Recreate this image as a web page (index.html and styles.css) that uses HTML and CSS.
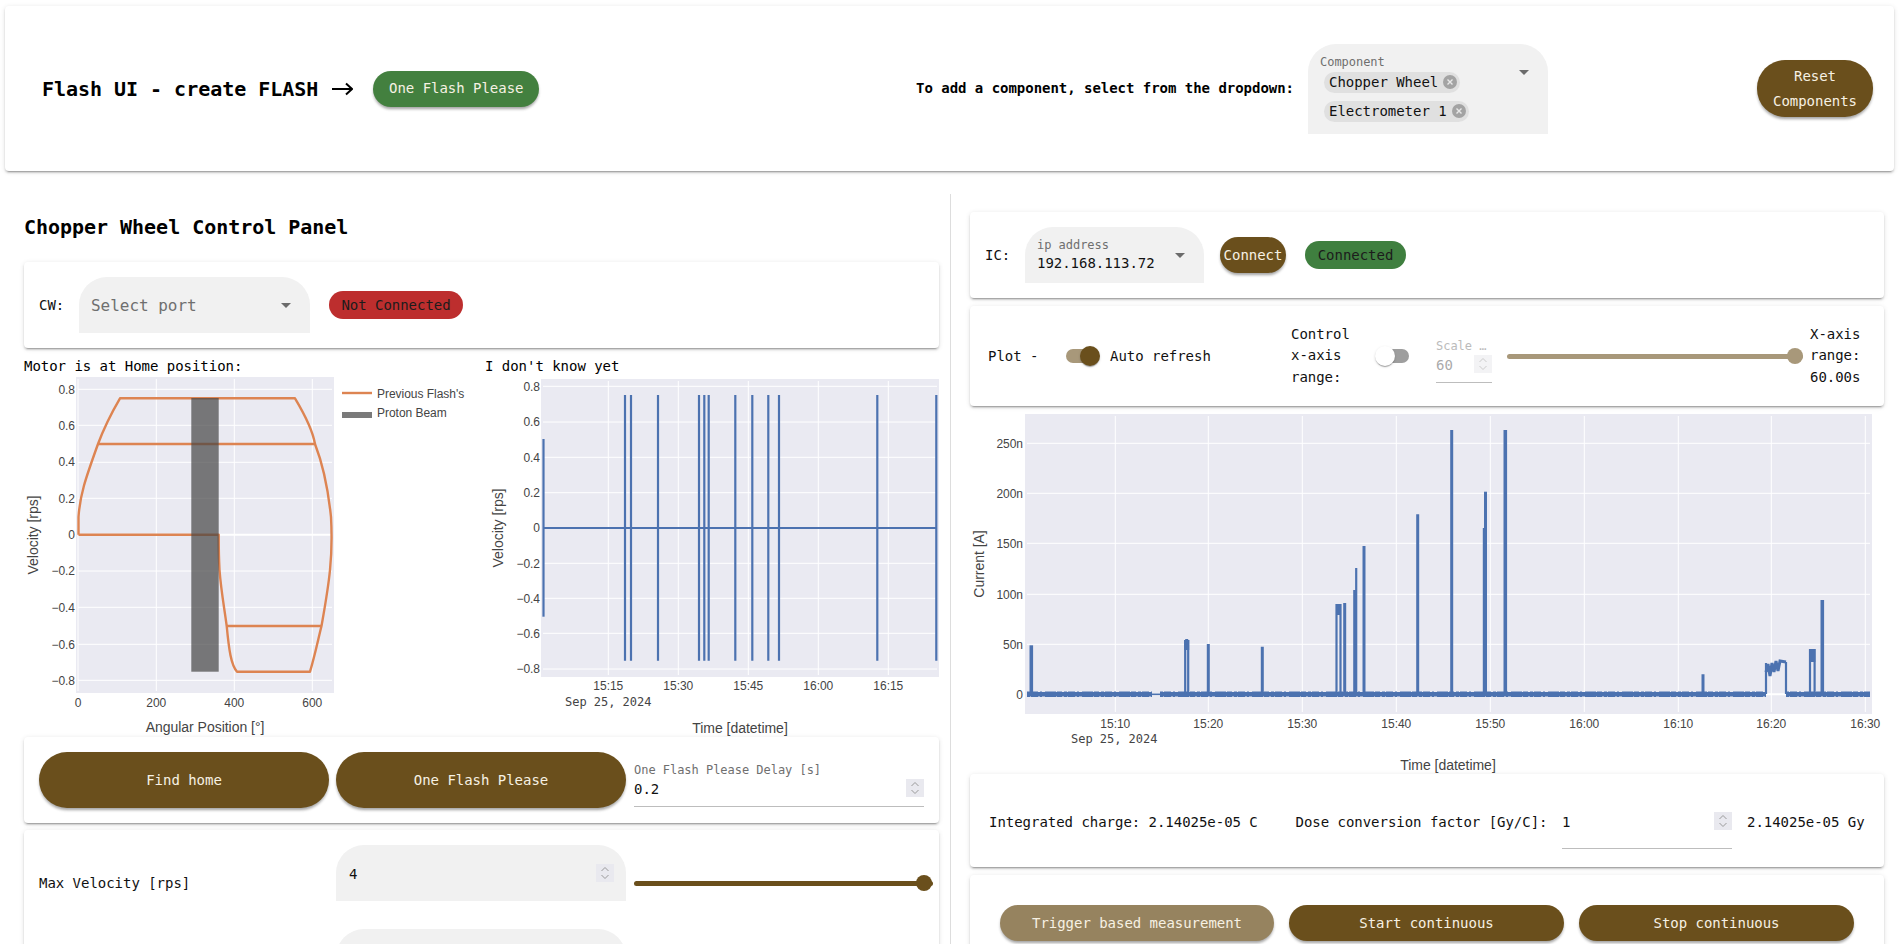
FILE: index.html
```html
<!DOCTYPE html>
<html lang="en">
<head>
<meta charset="utf-8">
<title>Flash UI</title>
<link rel="stylesheet" href="styles.css">
</head>
<body>
<header class="card top">
  <h1 class="brand">Flash UI - create FLASH</h1>
  <svg class="brand-arrow" width="21" height="14" viewBox="0 0 21 14"><path d="M0 7H20M14 1.5L20 7L14 12.5"/></svg>
  <button class="btn btn-green btn-flash">One Flash Please</button>
  <span class="hint">To add a component, select from the dropdown:</span>
  <div class="select select-comp">
    <div class="comp-body">
      <span class="float-label">Component</span>
      <span class="chip">Chopper Wheel<svg class="chip-x" width="14" height="14" viewBox="0 0 14 14"><circle cx="7" cy="7" r="7"/><path d="M4.5 4.5L9.5 9.5M9.5 4.5L4.5 9.5"/></svg></span>
      <span class="chip">Electrometer 1<svg class="chip-x" width="14" height="14" viewBox="0 0 14 14"><circle cx="7" cy="7" r="7"/><path d="M4.5 4.5L9.5 9.5M9.5 4.5L4.5 9.5"/></svg></span>
    </div>
    <i class="caret caret-top"></i>
  </div>
  <button class="btn btn-reset">Reset<br>Components</button>
</header>

<main class="columns">
  <section class="left">
    <h2 class="panel-title">Chopper Wheel Control Panel</h2>

    <div class="card row-cw">
      <span class="lbl">CW:</span>
      <div class="select select-port"><span class="placeholder">Select port</span><i class="caret"></i></div>
      <span class="badge badge-red">Not Connected</span>
    </div>

    <div class="charts">
      <div class="chart-a">
        <div class="chart-label">Motor is at Home position:</div>
        <svg class="chart" width="461" height="360" viewBox="24 377 461 360">
          <rect class="plot-bg" x="76" y="377" width="258" height="316"/>
          <path class="grid" d="M78 379V691M156.3 379V691M234.3 379V691M312.3 379V691"/>
          <path class="grid" d="M78 389.3H332M78 425.3H332M78 462.3H332M78 498.3H332M78 571H332M78 607.3H332M78 644.3H332M78 680.3H332"/>
          <path class="grid grid-zero" d="M78 534.7H332"/>
          <path class="orange" d="M78.5 534.7V517C80 495 85 480 98 444C105 425 112 412 120 398.3H295C305 415 313 432 315 444C322 462 328 488 331 517C332 535 332 550 330 570C328 590 325 606 321.5 626C318 640 315 655 310 671.7H237C231 665 229 650 226.7 626C224 606 221 590 219.5 570C218.7 555 218.7 545 218.7 534.7H78.5"/>
          <path class="orange" d="M98 444H315M226.7 626H321.5"/>
          <rect class="beam" x="191.3" y="398" width="27.4" height="273.7"/>
          <path class="orange" d="M342 393H372"/>
          <rect class="legend-beam" x="342" y="412" width="30" height="6"/>
          <text class="tick" x="377" y="397.5">Previous Flash's</text>
          <text class="tick" x="377" y="417">Proton Beam</text>
          <g class="tick end">
            <text x="75" y="393.5">0.8</text><text x="75" y="429.5">0.6</text><text x="75" y="466">0.4</text><text x="75" y="502.5">0.2</text><text x="75" y="539">0</text><text x="75" y="575">−0.2</text><text x="75" y="611.5">−0.4</text><text x="75" y="648.5">−0.6</text><text x="75" y="684.5">−0.8</text>
          </g>
          <g class="tick mid">
            <text x="78" y="706.5">0</text><text x="156.3" y="706.5">200</text><text x="234.3" y="706.5">400</text><text x="312.3" y="706.5">600</text>
          </g>
          <text class="axis mid" x="205" y="732">Angular Position [°]</text>
          <text class="axis mid" transform="translate(38 535) rotate(-90)">Velocity [rps]</text>
        </svg>
      </div>
      <div class="chart-b">
        <div class="chart-label">I don't know yet</div>
        <svg class="chart" width="455" height="360" viewBox="485 377 455 360">
          <rect class="plot-bg" x="541" y="379" width="398" height="298"/>
          <path class="grid" d="M608.3 381V675M678.3 381V675M748.3 381V675M818.3 381V675M888.3 381V675"/>
          <path class="grid" d="M543 386.3H937M543 422H937M543 457.3H937M543 492.7H937M543 563.3H937M543 598.3H937M543 633.3H937M543 669H937"/>
          <path class="grid grid-zero" d="M543 528H937"/>
          <path class="blue" d="M543.5 439V616.7"/>
          <path class="blue blue-main" d="M543.5 528H936.3"/>
          <path class="blue" d="M625 395V660.7M631 395V660.7M658 395V660.7M699 395V660.7M704.3 395V660.7M708.7 395V660.7M735.3 395V660.7M752.3 395V660.7M768.3 395V660.7M779 395V660.7M877.3 395V660.7M936.3 395V660.7"/>
          <g class="tick end">
            <text x="540" y="390.5">0.8</text><text x="540" y="426">0.6</text><text x="540" y="461.5">0.4</text><text x="540" y="497">0.2</text><text x="540" y="532">0</text><text x="540" y="567.5">−0.2</text><text x="540" y="602.5">−0.4</text><text x="540" y="637.5">−0.6</text><text x="540" y="673">−0.8</text>
          </g>
          <g class="tick mid">
            <text x="608.3" y="690">15:15</text><text x="678.3" y="690">15:30</text><text x="748.3" y="690">15:45</text><text x="818.3" y="690">16:00</text><text x="888.3" y="690">16:15</text>
          </g>
          <text class="tick-mono" x="565" y="706">Sep 25, 2024</text>
          <text class="axis mid" x="740" y="733">Time [datetime]</text>
          <text class="axis mid" transform="translate(503 528) rotate(-90)">Velocity [rps]</text>
        </svg>
      </div>
    </div>

    <div class="card row-btns">
      <button class="btn btn-wide">Find home</button>
      <button class="btn btn-wide">One Flash Please</button>
      <div class="num num-delay">
        <span class="float-label">One Flash Please Delay [s]</span>
        <div class="num-row"><span>0.2</span><span class="spin"><svg width="18" height="18" viewBox="0 0 18 18"><path d="M5.5 7L9 3.5L12.5 7M5.5 11L9 14.5L12.5 11"/></svg></span></div>
      </div>
    </div>

    <div class="card params">
      <div class="param">
        <span class="param-name">Max Velocity [rps]</span>
        <div class="filled"><span>4</span><span class="spin"><svg width="18" height="18" viewBox="0 0 18 18"><path d="M5.5 7L9 3.5L12.5 7M5.5 11L9 14.5L12.5 11"/></svg></span></div>
        <div class="slider slider-dark"><i class="thumb"></i></div>
      </div>
      <div class="param">
        <span class="param-name"></span>
        <div class="filled"></div>
      </div>
    </div>
  </section>

  <section class="right">
    <div class="card row-ic">
      <span class="lbl">IC:</span>
      <div class="select select-ip">
        <div class="ip-body"><span class="float-label">ip address</span><span class="ip-val">192.168.113.72</span></div>
        <i class="caret"></i>
      </div>
      <button class="btn btn-connect">Connect</button>
      <span class="badge badge-green">Connected</span>
    </div>

    <div class="card row-plot">
      <span class="plot-name">Plot -</span>
      <span class="switch switch-on"><i class="knob"></i></span>
      <span class="auto">Auto refresh</span>
      <span class="stack stack-ctl">Control<br>x-axis<br>range:</span>
      <span class="switch switch-off"><i class="knob"></i></span>
      <div class="num num-scale">
        <span class="float-label">Scale …</span>
        <div class="num-row"><span>60</span><span class="spin"><svg width="18" height="18" viewBox="0 0 18 18"><path d="M5.5 7L9 3.5L12.5 7M5.5 11L9 14.5L12.5 11"/></svg></span></div>
      </div>
      <div class="slider slider-light"><i class="thumb"></i></div>
      <span class="stack stack-range">X-axis<br>range:<br>60.00s</span>
    </div>

    <svg class="chart" width="914" height="368" viewBox="970 406 914 368">
      <rect class="plot-bg" x="1025" y="414" width="847" height="300"/>
      <path class="grid" d="M1115.3 416V712M1208.3 416V712M1302.3 416V712M1396.3 416V712M1490.3 416V712M1584.3 416V712M1678.3 416V712M1771.3 416V712M1865.3 416V712"/>
      <path class="grid" d="M1027 443.3H1870M1027 493.3H1870M1027 543.3H1870M1027 594.3H1870M1027 644.3H1870"/>
      <path class="grid grid-zero" d="M1027 694.3H1870"/>
      <path class="curr curr-base" d="M1027 694.3H1152M1160 694.3H1766M1786 694.3H1870"/>
      <path class="curr curr-noise" d="M1027 694.3H1152M1160 694.3H1766M1786 694.3H1870"/>
      <path class="curr curr-thin" d="M1152 694.3H1160"/>
      <path class="curr w4" d="M1031.3 694V645.3"/>
      <path class="curr w2" d="M1185.2 694V640M1188.2 694V640M1185.2 640H1188.2"/>
      <path class="curr w5" d="M1186.7 650V640"/>
      <path class="curr w3" d="M1208.3 694V644M1262.3 694V646.7M1344.7 694V603M1354.7 694V590M1364 694V546M1703 694V674.3"/>
      <path class="curr w2" d="M1336.5 694V605H1340.5V694"/>
      <path class="curr w5" d="M1338.5 615V605"/>
      <path class="curr w2" d="M1356.2 694V568"/>
      <path class="curr w3" d="M1417.7 694V514.3M1451.7 694V430M1484.3 694V528"/>
      <path class="curr w3" d="M1485.5 694V491.7"/>
      <path class="curr w4" d="M1505.3 694V430M1822.3 694V600"/>
      <path class="curr w2" d="M1766 694V663M1786 694V662"/>
      <path class="curr w3" d="M1766 672L1768 664L1770 676L1772 663L1774 672L1776 661L1778 671L1780 661L1786 662"/>
      <path class="curr w2" d="M1810 694V649M1814.6 694V649"/>
      <path class="curr w6" d="M1812.3 662V649"/>
      <g class="tick end">
        <text x="1023" y="447.5">250n</text><text x="1023" y="497.5">200n</text><text x="1023" y="547.5">150n</text><text x="1023" y="598.5">100n</text><text x="1023" y="648.5">50n</text><text x="1023" y="698.5">0</text>
      </g>
      <g class="tick mid">
        <text x="1115.3" y="727.5">15:10</text><text x="1208.3" y="727.5">15:20</text><text x="1302.3" y="727.5">15:30</text><text x="1396.3" y="727.5">15:40</text><text x="1490.3" y="727.5">15:50</text><text x="1584.3" y="727.5">16:00</text><text x="1678.3" y="727.5">16:10</text><text x="1771.3" y="727.5">16:20</text><text x="1865.3" y="727.5">16:30</text>
      </g>
      <text class="tick-mono" x="1071" y="743">Sep 25, 2024</text>
      <text class="axis mid" x="1448" y="770">Time [datetime]</text>
      <text class="axis mid" transform="translate(984 564) rotate(-90)">Current [A]</text>
    </svg>

    <div class="card row-dose">
      <span class="dose-a">Integrated charge: 2.14025e-05 C</span>
      <span class="dose-b">Dose conversion factor [Gy/C]:</span>
      <div class="num num-dose">
        <div class="num-row"><span>1</span><span class="spin"><svg width="18" height="18" viewBox="0 0 18 18"><path d="M5.5 7L9 3.5L12.5 7M5.5 11L9 14.5L12.5 11"/></svg></span></div>
      </div>
      <span class="dose-c">2.14025e-05 Gy</span>
    </div>

    <div class="card row-meas">
      <button class="btn btn-meas btn-light">Trigger based measurement</button>
      <button class="btn btn-meas">Start continuous</button>
      <button class="btn btn-meas">Stop continuous</button>
    </div>
  </section>
</main>
</body>
</html>
```

FILE: styles.css
```css
* { box-sizing: border-box; }
html, body { margin: 0; padding: 0; height: 944px; overflow: hidden; background: #fff; }
body {
  font-family: "DejaVu Sans Mono", "Liberation Mono", monospace;
  font-size: 14px;
  line-height: 21px;
  letter-spacing: -0.03px;
  color: #111;
}
.card {
  background: #fff;
  border-radius: 4px;
  box-shadow: 0 3px 1px -2px rgba(0,0,0,.2), 0 2px 2px rgba(0,0,0,.14), 0 1px 5px rgba(0,0,0,.12);
}
.btn {
  border: 0;
  margin: 0;
  padding: 0;
  font: inherit;
  letter-spacing: inherit;
  color: #f7f1e3;
  background: #6a4f1c;
  border-radius: 28px;
  box-shadow: 0 3px 3px -1px rgba(0,0,0,.25), 0 2px 3px rgba(0,0,0,.15);
}
.btn-green { background: #43803f; }
.btn-light { background: #96835f; }

/* Top bar */
.top {
  display: flex;
  align-items: center;
  height: 165px;
  margin: 6px 10px 0 5px;
  padding: 0 21px 0 37px;
}
.brand { margin: 0; font-size: 20px; font-weight: 700; line-height: 28px; color: #000; }
.brand-arrow { margin-left: 14px; fill: none; stroke: #000; stroke-width: 2; }
.btn-flash { width: 166px; height: 36px; margin-left: 20px; }
.hint { margin-left: auto; font-weight: 700; color: #000; }
.select {
  display: flex;
  align-items: center;
  background: #f1f1f1;
  border-radius: 28px 28px 0 0;
  padding: 0 19px 0 12px;
}
.caret {
  margin-left: auto;
  width: 0;
  height: 0;
  border-left: 5px solid transparent;
  border-right: 5px solid transparent;
  border-top: 5px solid #6b6b6b;
}
.caret-top { align-self: flex-start; margin-top: 26px; }
.float-label { font-size: 12px; line-height: 14px; color: #6f6f6f; }
.select-comp { width: 240px; height: 90px; margin-left: 14px; }
.comp-body { display: flex; flex-direction: column; align-items: flex-start; align-self: flex-start; padding-top: 11px; }
.chip {
  display: flex;
  align-items: center;
  gap: 5px;
  height: 21px;
  margin: 3px 0 5px 4px;
  padding: 0 3px 0 5px;
  background: #e0e0e0;
  border-radius: 11px;
  white-space: nowrap;
}
.chip-x circle { fill: #a3a3a3; }
.chip-x path { stroke: #e8e8e8; stroke-width: 1.4; fill: none; }
.btn-reset { width: 116px; height: 57px; margin-left: 209px; line-height: 25px; }

/* Columns */
.columns { display: flex; margin-top: 23px; }
.left { width: 951px; flex: none; padding-left: 24px; padding-right: 11px; border-right: 1px solid #ddd; height: 760px; }
.right { width: 933px; flex: none; padding-left: 19px; padding-top: 18px; }
.panel-title { margin: 0; padding: 19px 0 21px; font-size: 20px; font-weight: 700; line-height: 28px; color: #000; }
.lbl { width: 25px; margin-right: 15px; }

.row-cw { display: flex; align-items: center; height: 86px; padding-left: 15px; }
.select-port { width: 231px; height: 56px; margin-right: 19px; }
.placeholder { font-size: 16px; color: #6f6f6f; }
.badge { display: flex; align-items: center; justify-content: center; height: 28px; border-radius: 14px; color: #1c1c1c; }
.badge-red { width: 134px; background: #bd2e2e; }
.badge-green { width: 101px; background: #3f7f3f; }

/* Charts */
.charts { display: flex; padding-top: 8px; }
.chart-a { width: 461px; }
.chart-b { width: 455px; }
.chart-label { line-height: 21px; color: #000; }
.chart { display: block; }
.plot-bg { fill: #eaeaf2; }
.grid { stroke: #fff; stroke-width: 1; fill: none; }
.grid-zero { stroke-width: 2; }
.orange { fill: none; stroke: #dd8452; stroke-width: 2.4; stroke-linejoin: round; }
.beam { fill: #444; opacity: .7; }
.legend-beam { fill: #7a7a7a; }
.blue { fill: none; stroke: #4c72b0; stroke-width: 2.2; }
.blue-main { stroke-width: 2; }
.curr { fill: none; stroke: #4c72b0; stroke-width: 2; }
.curr-base { stroke-width: 4.6; }
.curr-noise { stroke-width: 5.6; stroke-dasharray: 3 1 7 2 2 3 11 1 5 2; }
.curr-thin { stroke-width: 1.6; }
.w2 { stroke-width: 2.2; }
.w3 { stroke-width: 3; }
.w4 { stroke-width: 3.6; }
.w5 { stroke-width: 5; }
.w6 { stroke-width: 6; }
.tick, .tick text { font-family: "Liberation Sans", Arial, sans-serif; font-size: 12px; fill: #444; }
.tick-mono { font-family: "DejaVu Sans Mono", monospace; font-size: 12px; fill: #444; }
.axis { font-family: "Liberation Sans", Arial, sans-serif; font-size: 14px; fill: #444; }
.end { text-anchor: end; }
.mid { text-anchor: middle; }

/* Buttons row */
.row-btns { display: flex; align-items: center; height: 86px; padding-left: 15px; gap: 7px; }
.btn-wide { width: 290px; height: 56px; flex: none; }
.num { display: flex; flex-direction: column; border-bottom: 1px solid #bdbdbd; padding-bottom: 6px; }
.num .float-label { margin-bottom: 2px; }
.num-row { display: flex; justify-content: space-between; height: 21px; }
.spin { display: block; width: 18px; height: 18px; background: #e9e9ef; }
.spin svg { display: block; fill: none; stroke: #9a9a9a; stroke-width: 1; }
.num-delay { width: 290px; margin-left: 1px; align-self: flex-start; margin-top: 26px; }

/* Params */
.params { margin-top: 7px; padding: 15px 15px 0; height: 160px; }
.param { display: flex; align-items: flex-start; margin-bottom: 28px; }
.param-name { width: 297px; flex: none; margin-top: 28px; }
.filled {
  display: flex;
  justify-content: space-between;
  width: 290px;
  height: 56px;
  flex: none;
  padding: 19px 12px 0 13px;
  background: #f1f1f1;
  border-radius: 28px 28px 0 0;
}
.slider { position: relative; display: flex; align-items: center; justify-content: flex-end; flex: none; width: 299px; height: 16px; margin-left: 8px; }
.slider::before { content: ""; position: absolute; left: 0; right: 0; height: 5px; border-radius: 3px; background: #6a4f1c; }
.thumb { position: relative; width: 16px; height: 16px; margin-right: 1px; border-radius: 50%; background: #6a4f1c; }
.slider-dark { margin-top: 30px; }
.slider-light { width: 296px; margin-left: 15px; }
.slider-light::before { background: #a8987a; }
.slider-light .thumb { background: #a8987a; margin-right: 0; }

/* Right column */
.row-ic { display: flex; align-items: center; height: 86px; width: 914px; padding-left: 15px; margin-bottom: 8px; }
.select-ip { width: 179px; height: 56px; }
.ip-body { display: flex; flex-direction: column; align-self: flex-start; padding-top: 11px; }
.ip-val { line-height: 20px; margin-top: 1px; }
.btn-connect { width: 66px; height: 36px; margin-left: 16px; margin-right: 19px; }

.row-plot { display: flex; align-items: center; height: 100px; width: 914px; padding-left: 18px; }
.plot-name { width: 50px; margin-right: 28px; white-space: nowrap; }
.switch { position: relative; display: flex; width: 34px; height: 20px; flex: none; }
.switch::before { content: ""; position: absolute; top: 3px; height: 14px; border-radius: 7px; }
.switch-on { justify-content: flex-end; margin-right: 10px; }
.switch-on::before { left: 0; right: 6px; background: #a8987a; }
.switch-off { justify-content: flex-start; margin-left: 25px; }
.switch-off::before { left: 6px; right: 0; background: #9e9e9e; }
.knob { position: relative; width: 20px; height: 20px; border-radius: 50%; box-shadow: 0 2px 1px -1px rgba(0,0,0,.2), 0 1px 1px rgba(0,0,0,.14), 0 1px 3px rgba(0,0,0,.12); }
.switch-on .knob { background: #6a4f1c; }
.switch-off .knob { background: #fff; }
.auto { width: 101px; margin-right: 80px; white-space: nowrap; }
.stack { display: block; width: 59px; line-height: 21.5px; flex: none; }
.stack-range { width: 55px; margin-left: 7px; }
.num-scale { width: 56px; margin-left: 27px; color: #aaa; align-self: flex-start; margin-top: 33px; }
.num-scale .float-label { color: #bbb; white-space: nowrap; }
.num-scale .spin { background: #f3f3f5; }
.num-scale .spin svg { stroke: #ccc; }

.row-dose { display: flex; align-items: flex-start; width: 914px; height: 93px; padding: 38px 0 0 19px; white-space: nowrap; }
.dose-a { width: 306.5px; }
.dose-b { width: 266.5px; }
.num-dose { width: 170px; padding-bottom: 15px; }
.dose-c { margin-left: 15px; }

.row-meas { display: flex; width: 914px; height: 100px; margin-top: 8px; padding: 30px 0 0 30px; gap: 15px; }
.btn-meas { width: 275px; height: 36px; }
.btn-light { width: 274px; }
```
